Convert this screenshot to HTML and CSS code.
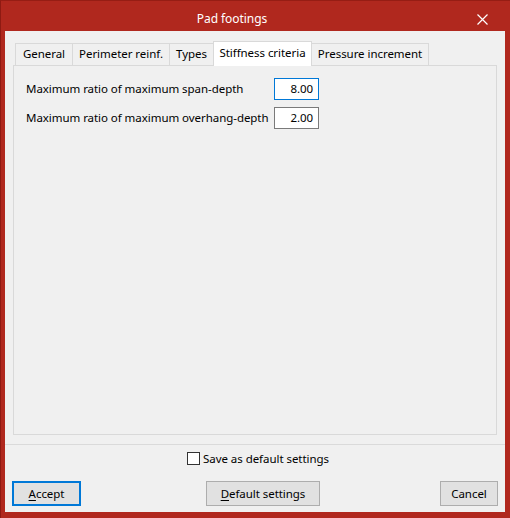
FILE: index.html
```html
<!DOCTYPE html>
<html>
<head>
<meta charset="utf-8">
<link rel="stylesheet" href="styles.css">
</head>
<body>
<div class="window">
  <div class="titlebar">
    <div class="title">Pad footings</div>
    <div class="close">
      <svg width="11" height="11" viewBox="0 0 11 11"><path d="M0.5 0.5 L10.5 10.5 M10.5 0.5 L0.5 10.5" stroke="#fff" stroke-width="1.2" fill="none"/></svg>
    </div>
  </div>
  <div class="client">
    <div class="tabs">
      <div class="tab t1">General</div>
      <div class="tab t2">Perimeter reinf.</div>
      <div class="tab t3">Types</div>
      <div class="tab t4 selected">Stiffness criteria</div>
      <div class="tab t5">Pressure increment</div>
    </div>
    <div class="panel">
      <div class="form">
        <div class="label">Maximum ratio of maximum span-depth</div>
        <div class="input focused">8.00</div>
        <div class="label">Maximum ratio of maximum overhang-depth</div>
        <div class="input">2.00</div>
      </div>
    </div>
    <div class="separator"></div>
    <div class="checkrow">
      <span class="checkbox"></span>
      <span class="checklabel">Save as default settings</span>
    </div>
    <div class="buttons">
      <div class="btn accept"><u>A</u>ccept</div>
      <div class="btn defaults"><u>D</u>efault settings</div>
      <div class="btn cancel">Cancel</div>
    </div>
  </div>
</div>
</body>
</html>
```
FILE: styles.css
```css
* { box-sizing: border-box; }
html, body { margin: 0; padding: 0; }
body {
  font-family: "Noto Sans", "Liberation Sans", sans-serif;
  font-size: 11.5px;
  letter-spacing: -0.05px;
  color: #000;
  width: 510px;
  height: 518px;
  overflow: hidden;
}
.window {
  width: 510px;
  height: 518px;
  background: #b0281e;
  border-left: 1px solid #8e1a12;
  border-top: 1px solid #961d14;
  padding: 0 5px 6px 4px;
  display: flex;
  flex-direction: column;
}
.titlebar {
  height: 30px;
  display: flex;
  align-items: center;
}
.title {
  flex: 1;
  text-align: center;
  color: #fff;
  padding-right: 18px;
  padding-top: 4px;
  font-size: 12px;
}
.close {
  width: 11px;
  height: 11px;
  margin-right: 17px;
  margin-top: 6px;
  display: flex;
}
.client {
  flex: 1;
  background: #f0f0f0;
  padding: 10px 8px 0 8px;
  display: flex;
  flex-direction: column;
}
.tabs {
  display: flex;
  align-items: flex-end;
  height: 24px;
  padding-left: 2px;
  position: relative;
  z-index: 1;
}
.tab {
  height: 22px;
  border: 1px solid #d9d9d9;
  border-bottom: none;
  border-right: none;
  background: #f0f0f0;
  display: flex;
  align-items: center;
  justify-content: center;
  white-space: nowrap;
  padding-bottom: 2px;
}
.t1 { width: 57px; }
.t2 { width: 97px; }
.t3 { width: 44px; }
.t4 { width: 99px; }
.t5 { width: 117px; border-right: 1px solid #d9d9d9; }
.tab.selected {
  height: 25px;
  margin-bottom: -1px;
  background: #fff;
  border-right: 1px solid #d9d9d9;
  padding-bottom: 3px;
}
.tab.selected + .tab { border-left: none; }
.panel {
  height: 370px;
  border: 1px solid #d9d9d9;
  background: #f0f0f0;
  padding: 12px 0 0 12px;
}
.form {
  display: grid;
  grid-template-columns: 248px 45px;
  row-gap: 7px;
  align-items: center;
}
.label {
  white-space: nowrap;
  padding-bottom: 1px;
}
.input {
  height: 22px;
  border: 1px solid #7a7a7a;
  background: #fff;
  text-align: right;
  padding-right: 5px;
  line-height: 19px;
}
.input.focused { border-color: #0078d7; }
.separator {
  margin: 9px -8px 0 -8px;
  height: 1px;
  background: #dadada;
}
.checkrow {
  display: flex;
  justify-content: center;
  align-items: center;
  margin-top: 6px;
  height: 14px;
  padding-left: 6px;
}
.checkbox {
  width: 13px;
  height: 13px;
  border: 1px solid #333;
  background: #fff;
  margin-right: 3px;
}
.buttons {
  display: flex;
  justify-content: space-between;
  margin: 16px -1px 0 -1px;
}
.btn {
  height: 25px;
  border: 1px solid #adadad;
  background: #e1e1e1;
  display: flex;
  align-items: center;
  justify-content: center;
  white-space: nowrap;
  padding-bottom: 1px;
}
.btn u { text-decoration: underline; text-underline-offset: 2px; }
.accept { width: 69px; border: 2px solid #0078d7; }
.defaults { width: 114px; margin-left: 5px; }
.cancel { width: 58px; }
```
